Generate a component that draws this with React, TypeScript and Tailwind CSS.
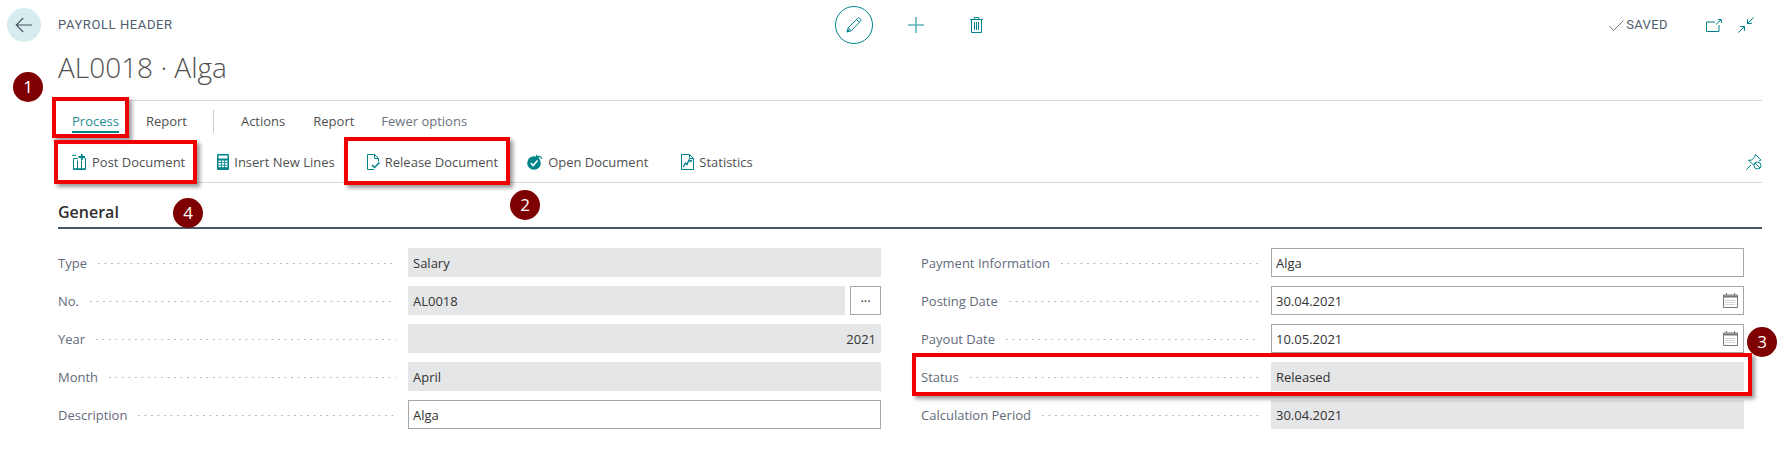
import type { ReactNode } from 'react';

const TEAL = '#00838a';

function BackIcon() {
  return (
    <svg width="18" height="16" viewBox="0 0 18 16" fill="none" stroke="#4b5563" strokeWidth="1.1">
      <path d="M17 8H1.2M8.2 1 1.2 8l7 7" />
    </svg>
  );
}

function PencilIcon() {
  return (
    <svg width="16" height="16" viewBox="0 0 18 18" fill="none" stroke={TEAL} strokeWidth="1.100">
      <path d="M1.200 16.800 2.600 12 13.400 1.400a1.500 1.500 0 0 1 2.100 0l1 1a1.500 1.500 0 0 1 0 2.100L5.900 15.400Z" />
      <path d="M2.600 12l3.300 3.400M12 3l3.200 3.200" />
      <path d="M1.200 16.800 2 14l2 2Z" fill={TEAL} />
    </svg>
  );
}

function PlusIcon() {
  return (
    <svg width="16" height="16" viewBox="0 0 16 16" stroke="#5fb3b7" strokeWidth="1.600">
      <path d="M8 0v16M0 8h16" />
    </svg>
  );
}

function TrashIcon() {
  return (
    <svg width="13" height="16" viewBox="0 0 13 16" fill="none" stroke={TEAL} strokeWidth="1">
      <path d="M0 2.500h13M4.200 2.500V.6h4.600v1.900M1.500 2.500v13h10v-13M4.500 5v8M6.500 5v8M8.500 5v8" />
    </svg>
  );
}

function OpenNewIcon() {
  return (
    <svg width="16" height="13" viewBox="0 0 16 13" fill="none" stroke={TEAL} strokeWidth="1">
      <path d="M9 3H.5v9.500h12.500V6" />
      <path d="M10 5.500 15 .8M12 .6h3.400V4" />
    </svg>
  );
}

function CollapseIcon() {
  return (
    <svg width="16" height="16" viewBox="0 0 16 16" fill="none" stroke={TEAL} strokeWidth="1">
      <path d="M15.600.4 9.500 6.500M9.500 2.200v4.300h4.400M.4 15.600l6.100-6.100M2.200 9.500h4.300v4.300" />
    </svg>
  );
}

function PinOffIcon() {
  return (
    <svg width="16" height="16" viewBox="0 0 16 16" fill="none" stroke={TEAL} strokeWidth="1">
      <path d="M.3 15.700 5 11M9.500.5l5.500 5.600-2 .6M9.500.5l-.7 2.400L5 6.400 2.500 6l5 5" />
      <circle cx="11.500" cy="11.500" r="3.500" />
      <path d="m9 9 5 5" />
    </svg>
  );
}

function PostIcon() {
  return (
    <svg width="15" height="16" viewBox="0 0 15 16" fill="none" stroke={TEAL} strokeWidth="1">
      <path d="M1.500 4.500v11h12V4.500h-1M1.500 4.500H6M5.500 6.500v8.500M9.500 6.500v8.500M0 1.300h4" />
      <path d="M1.500 15h12" strokeWidth="1.500" />
      <path d="M6.500 3h6.500M9.800 0v6" strokeWidth="1.800" />
    </svg>
  );
}

function CalcIcon() {
  return (
    <svg width="12" height="16" viewBox="0 0 12 16">
      <rect width="12" height="16" rx="1.200" fill={TEAL} />
      <rect x="1.500" y="1.500" width="9" height="3" fill="#fff" />
      {[6.500, 9, 11.500].flatMap((y) =>
        [1.500, 4.800, 8.100].map((x) => <rect key={`${x}-${y}`} x={x} y={y} width="2.400" height="1.700" fill="#fff" />),
      )}
    </svg>
  );
}

function ReleaseIcon() {
  return (
    <svg width="13" height="16" viewBox="0 0 13 16" fill="none" stroke={TEAL} strokeWidth="1">
      <path d="M7 15.500H.5V.5h7l4 4v3M7.500.5v4h4" />
      <path d="m5 11 2.500 2.500L12.500 8.500" strokeWidth="1.500" />
    </svg>
  );
}

function OpenDocIcon() {
  return (
    <svg width="16" height="16" viewBox="0 0 16 16" fill="none">
      <circle cx="7" cy="9" r="6.800" fill={TEAL} />
      <path d="m3.800 9 2.400 2.500L10.500 6.500" stroke="#fff" strokeWidth="1.600" />
      <path d="M10 3.200c2-1.700 4-.8 5 1.600M9.800.8l-.3 2.900 2.800.3" stroke={TEAL} strokeWidth="1.200" />
    </svg>
  );
}

function StatsIcon() {
  return (
    <svg width="13" height="16" viewBox="0 0 13 16" fill="none" stroke={TEAL} strokeWidth="1">
      <path d="M.5 15.500V.5h8l4 4v11Z" />
      <path d="M8.500.5v4h4" />
      <path d="M2 13l2.500-4L6 10.500 8 6l1.500 1.500L11 6" strokeWidth="1.400" />
    </svg>
  );
}

function CalendarIcon() {
  return (
    <svg width="15" height="15" viewBox="0 0 15 15" fill="none" stroke="#777" strokeWidth="1">
      <path d="M.5 2h14v12.500H.5Z" />
      <path d="M.5 3.500h14" strokeWidth="2" />
      <path d="M3.500 0v2M11.500 0v2" />
      <path d="M2.500 7.500h10M2.500 9.500h10M2.500 11.500h10" stroke="#aaa" strokeDasharray="1 1" />
    </svg>
  );
}

function Action({ icon, label, className }: { icon: ReactNode; label: string; className?: string }) {
  return (
    <button type="button" className={`flex items-center gap-[5px] text-[13px] text-[#505050] ${className ?? ''}`}>
      {icon}
      <span className="pt-[2px]">{label}</span>
    </button>
  );
}

function Field({ label, children }: { label: string; children: ReactNode }) {
  return (
    <div className="flex h-[29px] gap-[12px]">
      <div className="flex w-[338px] items-center gap-[11px] pt-[2px] text-[13px] text-[#5f6b7a]">
        <span>{label}</span>
        <span className="h-px flex-1 bg-[linear-gradient(to_right,#b4b8c0_1.5px,transparent_1.5px)] bg-[length:6.5px_1px] bg-repeat-x" />
      </div>
      <div className="flex min-w-0 flex-1 gap-[5px]">{children}</div>
    </div>
  );
}

function ReadOnly({ value, right }: { value: string; right?: boolean }) {
  return (
    <div
      className={`flex flex-1 items-center bg-[#e5e6e8] px-[5px] pt-[2px] text-[13px] text-[#333] ${right ? 'justify-end' : ''}`}
    >
      {value}
    </div>
  );
}

function Input({ value, date }: { value: string; date?: boolean }) {
  return (
    <div className="flex flex-1 items-center justify-between border border-[#a6a6a6] pl-[4px] pr-[5px] text-[13px] text-[#333]">
      <span className="pt-[2px]">{value}</span>
      {date && <CalendarIcon />}
    </div>
  );
}

function Badge({ n, className }: { n: number; className: string }) {
  return (
    <div
      className={`absolute flex h-[30px] w-[30px] items-center justify-center rounded-full bg-[#7f0000] text-[17px] text-white ${className}`}
    >
      {n}
    </div>
  );
}

function RedBox({ className }: { className: string }) {
  return <div className={`absolute border-4 border-[#f00000] shadow-[3px_3px_4px_rgba(0,0,0,0.4)] ${className}`} />;
}

export default function App() {
  return (
    <div className="relative h-[458px] w-[1779px] overflow-hidden bg-white font-['Open_Sans',sans-serif]">
      <header className="flex h-[50px] items-center pl-[7px] pr-[25px]">
        <button type="button" className="flex h-[34px] w-[34px] items-center justify-center rounded-full bg-[#d6ecef]">
          <BackIcon />
        </button>
        <span className="ml-[17px] w-[777px] font-['Roboto',sans-serif] text-[13px] uppercase tracking-[0.6px] text-[#505c6d]">
          Payroll Header
        </span>
        <button type="button" className="flex h-[38px] w-[38px] items-center justify-center rounded-full border border-[#00838a]">
          <PencilIcon />
        </button>
        <span className="ml-[35px]"><PlusIcon /></span>
        <span className="ml-[46px]"><TrashIcon /></span>
        <div className="ml-auto flex items-center">
          <svg width="15" height="11" viewBox="0 0 15 11" fill="none" stroke="#5f6b7a" strokeWidth="0.900">
            <path d="m.5 6 4 4.500L14.500.5" />
          </svg>
          <span className="ml-[2px] font-['Roboto',sans-serif] text-[13px] tracking-[0.4px] text-[#505c6d]">SAVED</span>
          <span className="ml-[38px]"><OpenNewIcon /></span>
          <span className="ml-[16px]"><CollapseIcon /></span>
        </div>
      </header>

      <div className="ml-[58px] mr-[17px]">
        <h1 className="flex h-[50px] items-center pb-[16px] text-[28px] font-light text-[#505050]">AL0018 · Alga</h1>

        <nav className="flex h-[42px] items-center border-t border-[#d5d8de] pl-[14px] text-[13px] text-[#505050]">
          <span className="relative text-[#1f8c92]">
            Process
            <span className="absolute inset-x-0 bottom-[-2px] h-[2px] bg-[#00838a]" />
          </span>
          <span className="ml-[27px]">Report</span>
          <span className="ml-[26px] h-[23px] w-px bg-[#c8ccd2]" />
          <span className="ml-[27px]">Actions</span>
          <span className="ml-[28px]">Report</span>
          <span className="ml-[27px] text-[#6b7280]">Fewer options</span>
        </nav>

        <div className="flex h-[41px] items-center border-b border-[#d5d8de] pl-[14px]">
          <Action icon={<PostIcon />} label="Post Document" />
          <Action icon={<CalcIcon />} label="Insert New Lines" className="ml-[32px]" />
          <Action icon={<ReleaseIcon />} label="Release Document" className="ml-[32px]" />
          <Action icon={<OpenDocIcon />} label="Open Document" className="ml-[29px]" />
          <Action icon={<StatsIcon />} label="Statistics" className="ml-[33px]" />
          <span className="ml-auto"><PinOffIcon /></span>
        </div>

        <h2 className="flex h-[46px] items-center border-b-2 border-[#4a5568] pt-[14px] text-[16px] font-semibold text-[#2f2f2f]">General</h2>

        <div className="mt-[19px] grid w-[1686px] grid-cols-2 gap-x-[40px] gap-y-[9px]">
          <Field label="Type"><ReadOnly value="Salary" /></Field>
          <Field label="Payment Information"><Input value="Alga" /></Field>
          <Field label="No.">
            <ReadOnly value="AL0018" />
            <button type="button" className="w-[31px] border border-[#a6a6a6] pb-[6px] text-[13px] text-[#333]">...</button>
          </Field>
          <Field label="Posting Date"><Input value="30.04.2021" date /></Field>
          <Field label="Year"><ReadOnly value="2021" right /></Field>
          <Field label="Payout Date"><Input value="10.05.2021" date /></Field>
          <Field label="Month"><ReadOnly value="April" /></Field>
          <Field label="Status"><ReadOnly value="Released" /></Field>
          <Field label="Description"><Input value="Alga" /></Field>
          <Field label="Calculation Period"><ReadOnly value="30.04.2021" /></Field>
        </div>
      </div>

      <RedBox className="left-[52px] top-[97px] h-[41px] w-[77px]" />
      <RedBox className="left-[54px] top-[140px] h-[44px] w-[143px]" />
      <RedBox className="left-[344px] top-[137px] h-[48px] w-[166px]" />
      <RedBox className="left-[912px] top-[353px] h-[43px] w-[840px]" />
      <Badge n={1} className="left-[13px] top-[72px]" />
      <Badge n={4} className="left-[173px] top-[198px]" />
      <Badge n={2} className="left-[510px] top-[190px]" />
      <Badge n={3} className="left-[1747px] top-[327px]" />
    </div>
  );
}
